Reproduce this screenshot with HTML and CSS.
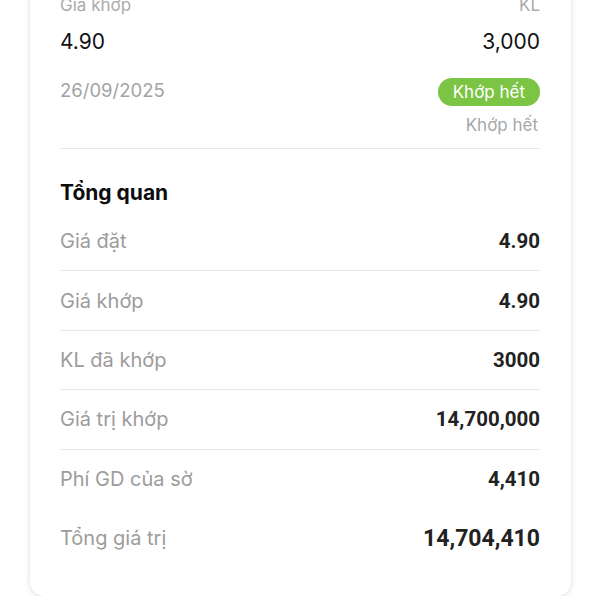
FILE: index.html
```html
<!DOCTYPE html>
<html lang="vi">
<head>
<meta charset="utf-8">
<title>Chi tiết lệnh</title>
<link rel="stylesheet" href="styles.css">
</head>
<body>
<div class="card">
  <div class="line label-line">
    <span>Giá khớp</span>
    <span>KL</span>
  </div>
  <div class="line value-line">
    <span>4.90</span>
    <span>3,000</span>
  </div>
  <div class="line status-line">
    <span class="date">26/09/2025</span>
    <span class="badge">Khớp hết</span>
  </div>
  <div class="sub-status">Khớp hết</div>

  <h2 class="section-title">Tổng quan</h2>
  <div class="rows">
    <div class="row"><span class="k">Giá đặt</span><span class="v">4.90</span></div>
    <div class="row"><span class="k">Giá khớp</span><span class="v">4.90</span></div>
    <div class="row"><span class="k">KL đã khớp</span><span class="v">3000</span></div>
    <div class="row"><span class="k">Giá trị khớp</span><span class="v">14,700,000</span></div>
    <div class="row no-line"><span class="k">Phí GD của sờ</span><span class="v">4,410</span></div>
    <div class="row no-line"><span class="k">Tổng giá trị</span><span class="v total">14,704,410</span></div>
  </div>
</div>
</body>
</html>
```
FILE: styles.css
```css
* { box-sizing: border-box; }
html, body {
  margin: 0;
  padding: 0;
  background: #ffffff;
  font-family: "Inter", "Roboto", "Noto Sans", sans-serif;
  overflow: hidden;
}
.card {
  margin: -26px 29px 0 30px;
  padding: 20px 31px 28px 30px;
  background: #fff;
  border-radius: 14px;
  box-shadow: 0 1px 6px rgba(0, 0, 0, 0.13), 0 0 1px rgba(0, 0, 0, 0.08);
}
.line {
  display: flex;
  justify-content: space-between;
  align-items: center;
}
.label-line {
  font-size: 17px;
  line-height: 22px;
  color: #ababab;
}
.value-line {
  margin-top: 13px;
  font-size: 21px;
  line-height: 26px;
  color: #111;
}
.status-line {
  margin-top: 23px;
  height: 28px;
  align-items: flex-start;
}
.date {
  font-size: 18.5px;
  line-height: 24px;
  color: #a3a3a3;
}
.badge {
  height: 28px;
  padding: 0 15px;
  border-radius: 14px;
  background: #7cc444;
  color: #fff;
  font-size: 17px;
  line-height: 28px;
}
.sub-status {
  margin-top: 8px;
  padding-right: 2px;
  text-align: right;
  font-size: 17px;
  line-height: 22px;
  color: #a8a8a8;
  padding-bottom: 12px;
  border-bottom: 1px solid #e9e9e9;
}
.section-title {
  margin: 31px 0 0;
  font-size: 21px;
  line-height: 26px;
  font-weight: 700;
  color: #0d0d0d;
}
.rows {
  margin-top: 6px;
}
.row {
  display: flex;
  justify-content: space-between;
  align-items: center;
  height: 59.4px;
  border-bottom: 1px solid #e9e9e9;
}
.row.no-line {
  height: 59px;
  border-bottom: none;
}
.k {
  font-size: 20px;
  color: #9c9c9c;
}
.v {
  font-family: "Roboto", "Liberation Sans", sans-serif;
  font-weight: 700;
  font-size: 20.5px;
  color: #222;
}
.v.total {
  font-size: 23px;
}
```
